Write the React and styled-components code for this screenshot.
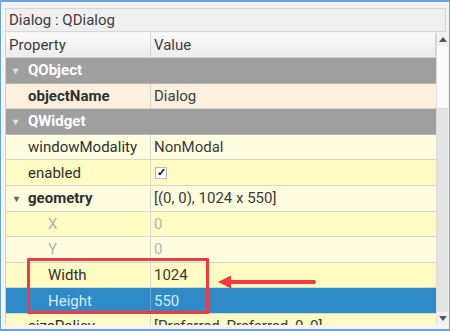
import React from 'react'
import styled, { createGlobalStyle } from 'styled-components'

const GlobalStyle = createGlobalStyle`
  html, body {
    margin: 0;
    padding: 0;
    background: #ffffff;
  }
  body {
    font-family: Roboto, "Liberation Sans", sans-serif;
  }
`

// property rows, top to bottom
const rows = [
  { kind: 'group', name: 'QObject' },
  { kind: 'prop', name: 'objectName', value: 'Dialog', bold: true, tone: 'peach', level: 0 },
  { kind: 'group', name: 'QWidget' },
  { kind: 'prop', name: 'windowModality', value: 'NonModal', tone: 'light', level: 0 },
  { kind: 'prop', name: 'enabled', check: true, tone: 'dark', level: 0 },
  { kind: 'prop', name: 'geometry', value: '[(0, 0), 1024 x 550]', bold: true, tone: 'light', level: 0, open: true },
  { kind: 'prop', name: 'X', value: '0', tone: 'dark', level: 1, disabled: true },
  { kind: 'prop', name: 'Y', value: '0', tone: 'light', level: 1, disabled: true },
  { kind: 'prop', name: 'Width', value: '1024', tone: 'dark', level: 1 },
  { kind: 'prop', name: 'Height', value: '550', tone: 'selected', level: 1 },
  { kind: 'prop', name: 'sizePolicy', value: '[Preferred, Preferred, 0, 0]', tone: 'dark', level: 0, closed: true },
]

const tones = {
  peach: '#fef0de',
  light: '#fefedf',
  dark: '#fefcc2',
  selected: '#2e8bc7',
}

const App = () => {
  return (
    <>
      <GlobalStyle />
      <Frame>
        <TitleBox>Dialog : QDialog</TitleBox>
        <TreeArea>
          <Table>
            <HeaderRow>
              <HeaderCell>Property</HeaderCell>
              <HeaderCell last>Value</HeaderCell>
            </HeaderRow>
            {rows.map((r, i) =>
              r.kind === 'group' ? (
                <GroupRow key={i}>
                  <Arrow light>▾</Arrow>
                  {r.name}
                </GroupRow>
              ) : (
                <PropRow key={i} tone={r.tone}>
                  <NameCell level={r.level} bold={r.bold} disabled={r.disabled} selected={r.tone === 'selected'}>
                    {r.open && <Arrow>▾</Arrow>}
                    {r.closed && <Arrow>▸</Arrow>}
                    {r.name}
                  </NameCell>
                  <ValueCell disabled={r.disabled} selected={r.tone === 'selected'}>
                    {r.check ? <CheckBox>✓</CheckBox> : r.value}
                  </ValueCell>
                </PropRow>
              )
            )}
          </Table>
          <ScrollBar>
            <ScrollButton>
              <svg width="8" height="5" viewBox="0 0 8 5"><path d="M0 5 L4 0 L8 5 Z" fill="#555" /></svg>
            </ScrollButton>
            <ScrollHandle />
            <ScrollTrack />
            <ScrollButton>
              <svg width="8" height="5" viewBox="0 0 8 5"><path d="M0 0 L4 5 L8 0 Z" fill="#555" /></svg>
            </ScrollButton>
          </ScrollBar>
        </TreeArea>
        <Highlight />
        <Pointer width="100" height="16" viewBox="0 0 100 16">
          <path d="M0 8 L13 1.5 L13 14.5 Z" fill="#ef3b42" />
          <line x1="10" y1="8" x2="96" y2="8" stroke="#ef3b42" strokeWidth="4" strokeLinecap="round" />
        </Pointer>
      </Frame>
    </>
  )
}

export default App

const Frame = styled.div`
  position: relative;
  width: 450px;
  height: 331px;
  box-sizing: border-box;
  border: 1px solid #6aa3d9;
  border-top-width: 2px;
  border-bottom-width: 2px;
  background: #f4f4f4;
  padding: 6px 1px 4px 4px;
  display: flex;
  flex-direction: column;
  overflow: hidden;
`

const TitleBox = styled.div`
  height: 24px;
  box-sizing: border-box;
  border: 1px solid #d6d6d6;
  background: #f0f0f0;
  color: #3c3c3c;
  font-size: 15px;
  line-height: 22px;
  padding-left: 3px;
  margin-right: 2px;
`

const TreeArea = styled.div`
  flex: 1;
  display: flex;
  margin-top: 1px;
  min-height: 0;
`

const Table = styled.div`
  flex: 1;
  overflow: hidden;
  border-left: 1px solid #cfcfcf;
`

const HeaderRow = styled.div`
  display: grid;
  grid-template-columns: 145px 1fr;
  height: 25px;
  box-sizing: border-box;
  background: linear-gradient(#fbfbfb, #ececec);
  border-bottom: 1px solid #d0d0d0;
`

const HeaderCell = styled.div`
  font-size: 15px;
  color: #3c3c3c;
  line-height: 24px;
  padding-left: 3px;
  border-right: 1px solid ${p => (p.last ? '#d0d0d0' : '#d6d6d6')};
`

const GroupRow = styled.div`
  height: 25.6px;
  box-sizing: border-box;
  background: #9f9f9f;
  border-bottom: 1px solid #b8b8b8;
  color: #ffffff;
  font-weight: bold;
  font-size: 15px;
  line-height: 25px;
  padding-left: 4px;
  display: flex;
  align-items: center;
`

const PropRow = styled.div`
  display: grid;
  grid-template-columns: 145px 1fr;
  height: 25.6px;
  box-sizing: border-box;
  background: ${p => tones[p.tone]};
  border-bottom: 1px solid #d7d7cf;
  font-size: 15px;
`

const NameCell = styled.div`
  display: flex;
  align-items: center;
  padding-left: ${p => (p.level ? 42 : 22)}px;
  border-right: 1px solid ${p => (p.selected ? '#6aa6d2' : '#d5d5cc')};
  font-weight: ${p => (p.bold ? 'bold' : 'normal')};
  color: ${p => (p.disabled ? '#b4b4ac' : p.selected ? '#d8e9f6' : '#2f2f2f')};
  white-space: nowrap;
`

const ValueCell = styled.div`
  display: flex;
  align-items: center;
  padding-left: 3px;
  color: ${p => (p.disabled ? '#b4b4ac' : p.selected ? '#d8e9f6' : '#3a3a3a')};
  white-space: nowrap;
`

const Arrow = styled.span`
  font-size: 10px;
  color: ${p => (p.light ? '#e4e4e4' : '#666')};
  width: 10px;
  margin-left: ${p => (p.light ? '0' : '-17px')};
  margin-right: ${p => (p.light ? '8px' : '7px')};
  text-align: center;
`

const CheckBox = styled.span`
  width: 12px;
  height: 12px;
  box-sizing: border-box;
  border: 1px solid #b9b9b9;
  background: #ffffff;
  color: #111;
  font-size: 11px;
  font-weight: bold;
  line-height: 10px;
  text-align: center;
  margin-left: 1px;
`

const ScrollBar = styled.div`
  width: 11px;
  display: flex;
  flex-direction: column;
  background: #e6e6e6;
  border-left: 1px solid #dcdcdc;
`

const ScrollButton = styled.div`
  height: 13px;
  display: flex;
  align-items: center;
  justify-content: center;
  background: #f2f2f2;
`

const ScrollHandle = styled.div`
  height: 62px;
  background: #fbfbfb;
  border-bottom: 1px solid #dddddd;
`

const ScrollTrack = styled.div`
  flex: 1;
  background: #e4e4e4;
`

const Highlight = styled.div`
  position: absolute;
  left: 26px;
  top: 256px;
  width: 182px;
  height: 56px;
  box-sizing: border-box;
  border: 3px solid #ef3b42;
  border-radius: 1px;
  pointer-events: none;
`

const Pointer = styled.svg`
  position: absolute;
  left: 217px;
  top: 272px;
`
